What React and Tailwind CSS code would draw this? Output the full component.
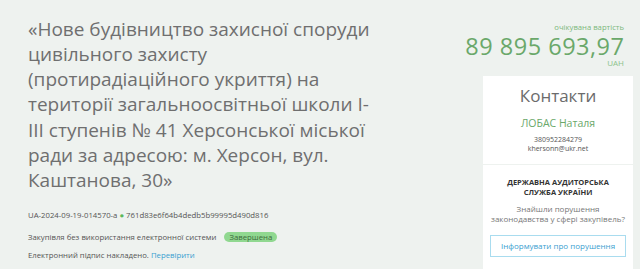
import React from "react";

const titleLines = [
  "«Нове будівництво захисної споруди",
  "цивільного захисту",
  "(протирадіаційного укриття) на",
  "території загальноосвітньої школи І-",
  "ІІІ ступенів № 41 Херсонської міської",
  "ради за адресою: м. Херсон, вул.",
  "Каштанова, 30»",
];

function ContactCard() {
  return (
    <div className="bg-white w-[150px] ml-auto mr-[7px] text-center">
      <div className="pt-[9px] pb-[11px] border-b border-[#eef2ef]">
        <h2 className="text-[17px] leading-[22px] text-[#6b6b6b]">Контакти</h2>
        <p className="mt-[10px] text-[10.5px] leading-[13px] text-[#6aa86a]">ЛОБАС Наталя</p>
        <p className="mt-[5px] text-[7px] leading-[9px] text-[#555]">380952284279</p>
        <p className="text-[7px] leading-[9px] text-[#555]">khersonn@ukr.net</p>
      </div>
      <div className="px-[7px] pt-[12px] pb-[12px]">
        <p className="text-[7.5px] leading-[10px] font-bold text-[#333]">
          ДЕРЖАВНА АУДИТОРСЬКА
          <br />
          СЛУЖБА УКРАЇНИ
        </p>
        <p className="mt-[7px] -mx-[5px] whitespace-nowrap text-[8px] leading-[10px] text-[#777]">
          Знайшли порушення
          <br />
          законодавства у сфері закупівель?
        </p>
        <button className="mt-[11px] w-full h-[22px] border border-[#a9dcef] text-[8px] text-[#3aa0d0]">
          Інформувати про порушення
        </button>
      </div>
    </div>
  );
}

export default function App() {
  return (
    <div
      className="w-[640px] h-[269px] overflow-hidden bg-[#eef2ef] flex"
      style={{ fontFamily: '"Open Sans", sans-serif' }}
    >
      <div className="flex-1 pl-[28px] pt-[16.5px]">
        <h1 className="text-[19px] leading-[25.3px] text-[#6f6f6f] whitespace-nowrap">
          {titleLines.map((line, i) => (
            <span key={i} className="block">
              {line}
            </span>
          ))}
        </h1>
        <div className="mt-[16.5px] text-[7.75px] leading-[10px] text-[#555]">
          <p>
            UA-2024-09-19-014570-a <span className="text-[#5cb85c]">●</span> 761d83e6f64b4dedb5b99995d490d816
          </p>
          <p className="mt-[11.5px] flex items-center">
            Закупівля без використання електронної системи
            <span className="ml-[8px] px-[5px] h-[10px] leading-[10px] rounded-full bg-[#90d890] text-[#3d6b3d]">
              Завершена
            </span>
          </p>
          <p className="mt-[8.5px]">
            Електронний підпис накладено. <span className="text-[#3aa0d0]">Перевірити</span>
          </p>
        </div>
      </div>
      <div className="w-[190px] shrink-0 pt-[22px]">
        <div className="pr-[16px] text-right text-[#6aa86a]">
          <p className="text-[7.7px] leading-[10px] text-[#7cb87c]">очікувана вартість</p>
          <p className="mt-[1px] text-[23.5px] leading-[26px] tracking-[0.5px] -mr-[0.5px]">89 895 693,97</p>
          <p className="-mt-[1px] text-[8px] leading-[10px] text-[#8cc28c]">UAH</p>
        </div>
        <div className="mt-[8px]">
          <ContactCard />
        </div>
      </div>
    </div>
  );
}
